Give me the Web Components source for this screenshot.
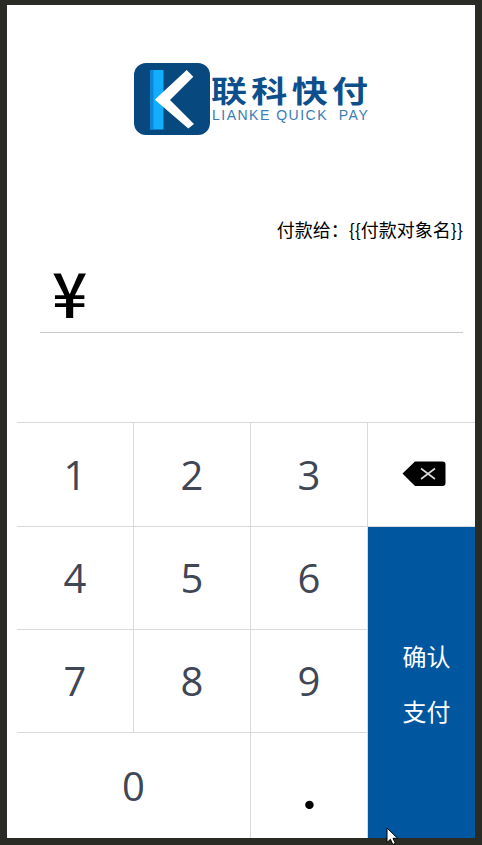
<!DOCTYPE html>
<html lang="zh-CN">
<head>
<meta charset="utf-8">
<title>联科快付</title>
<style>
  html, body { margin: 0; height: 100%; }
  body { background: #2b2b25; overflow: hidden; font-family: "Noto Sans CJK SC", sans-serif; }
</style>
</head>
<body>
<pay-screen>
  <pay-logo></pay-logo>
  <pay-amount payee="{{付款对象名}}"></pay-amount>
  <pay-keypad slot="keypad">
    <pay-key>1</pay-key>
    <pay-key>2</pay-key>
    <pay-key>3</pay-key>
    <pay-key kind="delete"></pay-key>
    <pay-key>4</pay-key>
    <pay-key>5</pay-key>
    <pay-key>6</pay-key>
    <pay-key kind="confirm"><span>确认</span><span>支付</span></pay-key>
    <pay-key>7</pay-key>
    <pay-key>8</pay-key>
    <pay-key>9</pay-key>
    <pay-key kind="zero">0</pay-key>
    <pay-key kind="dot">.</pay-key>
  </pay-keypad>
</pay-screen>

<script>
(function () {
  // small helper, every element sets its shadow root the same way
  class Base extends HTMLElement {
    constructor () {
      super()
      this.attachShadow({mode: 'open'})
    }
    render (html) {
      this.shadowRoot.innerHTML = html
    }
  }

  class PayScreen extends Base {
    connectedCallback () {
      this.render(`<style>
        :host { display: block; position: relative; height: 845px; box-sizing: border-box; padding: 5px 7px 7px; }
        .panel { display: flex; flex-direction: column; height: 833px; background: #fff; }
        .keys { margin-top: auto; padding-left: 10px; }
        svg { position: absolute; left: 386px; top: 827px; }
      </style>
      <div class="panel">
        <slot></slot>
        <div class="keys"><slot name="keypad"></slot></div>
      </div>
      <svg width="14" height="18" viewBox="0 0 14 18"><path d="M1 1v14.5l3.4-3.2 2.4 5.2 2.6-1.2-2.4-5h4.6z" fill="#fff" stroke="#000" stroke-width="1"/></svg>`)
    }
  }

  class PayLogo extends Base {
    connectedCallback () {
      this.render(`<style>
        :host { display: flex; height: 72px; margin: 58px 0 0 127px; }
        svg { flex: none; }
        .words { margin-left: 1px; padding-top: 15px; color: #0d4f8c; }
        .name { font: 700 30px/28px "Liberation Sans", "Noto Sans CJK SC", sans-serif; letter-spacing: 3.6px; white-space: nowrap; transform: scaleX(1.2); transform-origin: 0 0; }
        .latin { margin: 3px 0 0 1px; font: 400 14px/13px "Liberation Sans", sans-serif; color: #3a7cb4; letter-spacing: 1.5px; white-space: pre; }
      </style>
      <svg width="76" height="72" viewBox="0 0 76 72">
        <rect width="76" height="72" rx="12" fill="#07497f"/>
        <rect x="16" y="7" width="13.5" height="59.5" fill="#12aefc"/>
        <rect x="16" y="7" width="3.4" height="59.5" fill="#0b86d6"/>
        <path d="M21 36.5 52.7 7l6.6 6.7L36 37l24 24-5.7 4.5L22 37.8z" fill="#fff"/>
      </svg>
      <div class="words">
        <div class="name">联科快付</div>
        <div class="latin">LIANKE QUICK  PAY</div>
      </div>`)
    }
  }

  class PayAmount extends Base {
    connectedCallback () {
      this.render(`<style>
        :host { display: block; margin-top: 82px; padding-right: 12px; }
        .payee { font-size: 18px; line-height: 24px; text-align: right; color: #000; }
        .input { margin: 12px 0 0 33px; height: 79px; border-bottom: 1px solid #c8c8c8; }
        .sign { display: block; padding-left: 12px; font: 500 62px/76px "Noto Sans CJK SC", sans-serif; color: #000; }
      </style>
      <div class="payee">付款给：${this.getAttribute('payee')}</div>
      <div class="input"><span class="sign">¥</span></div>`)
    }
  }

  class PayKeypad extends Base {
    connectedCallback () {
      this.render(`<style>
        :host {
          display: grid;
          grid-template-columns: 117px 117px 117px 107px;
          grid-template-rows: 104px 103px 103px 106px;
        }
      </style>
      <slot></slot>`)
    }
  }

  const DELETE_ICON = `<svg width="44" height="26" viewBox="0 0 44 26">
    <path d="M13 .5h27.5a3 3 0 0 1 3 3v18.5a3 3 0 0 1-3 3H13L.5 12.5z" fill="#000"/>
    <path d="M19 7.5 33 18M33 7.5 19 18" stroke="#ddd" stroke-width="1.6" fill="none"/>
  </svg>`

  class PayKey extends Base {
    connectedCallback () {
      const kind = this.getAttribute('kind')
      this.render(`<style>
        :host {
          display: flex;
          align-items: center;
          justify-content: center;
          box-sizing: border-box;
          border-top: 1px solid #d9d9d9;
          border-right: 1px solid #d9d9d9;
          color: #3f4756;
          font: 400 40px/1 "Open Sans", sans-serif;
        }
        :host([kind="delete"]) { border-right: 0; padding: 0 0 2px 4px; }
        :host([kind="zero"]) { grid-column: 1 / span 2; grid-row: 4; }
        :host([kind="dot"]) { grid-column: 3; grid-row: 4; color: #000; border-right: 0; font: 900 52px/1 Lato, sans-serif; padding-top: 6px; }
        :host([kind="confirm"]) {
          grid-column: 4;
          grid-row: 2 / span 3;
          flex-direction: column;
          border: 0;
          border-top: 1px solid #d9d9d9;
          border-left: 1px solid #d9d9d9;
          margin-left: -1px;
          padding-left: 10px;
          background: #01579f padding-box;
          color: #fff;
          font: 400 24px/55px "Noto Sans CJK SC", sans-serif;
        }
        ::slotted(span) { display: block; }
      </style>
      ${kind === 'delete' ? DELETE_ICON : '<slot></slot>'}`)
    }
  }

  window.customElements.define('pay-screen', PayScreen)
  window.customElements.define('pay-logo', PayLogo)
  window.customElements.define('pay-amount', PayAmount)
  window.customElements.define('pay-keypad', PayKeypad)
  window.customElements.define('pay-key', PayKey)
})()
</script>
</body>
</html>
